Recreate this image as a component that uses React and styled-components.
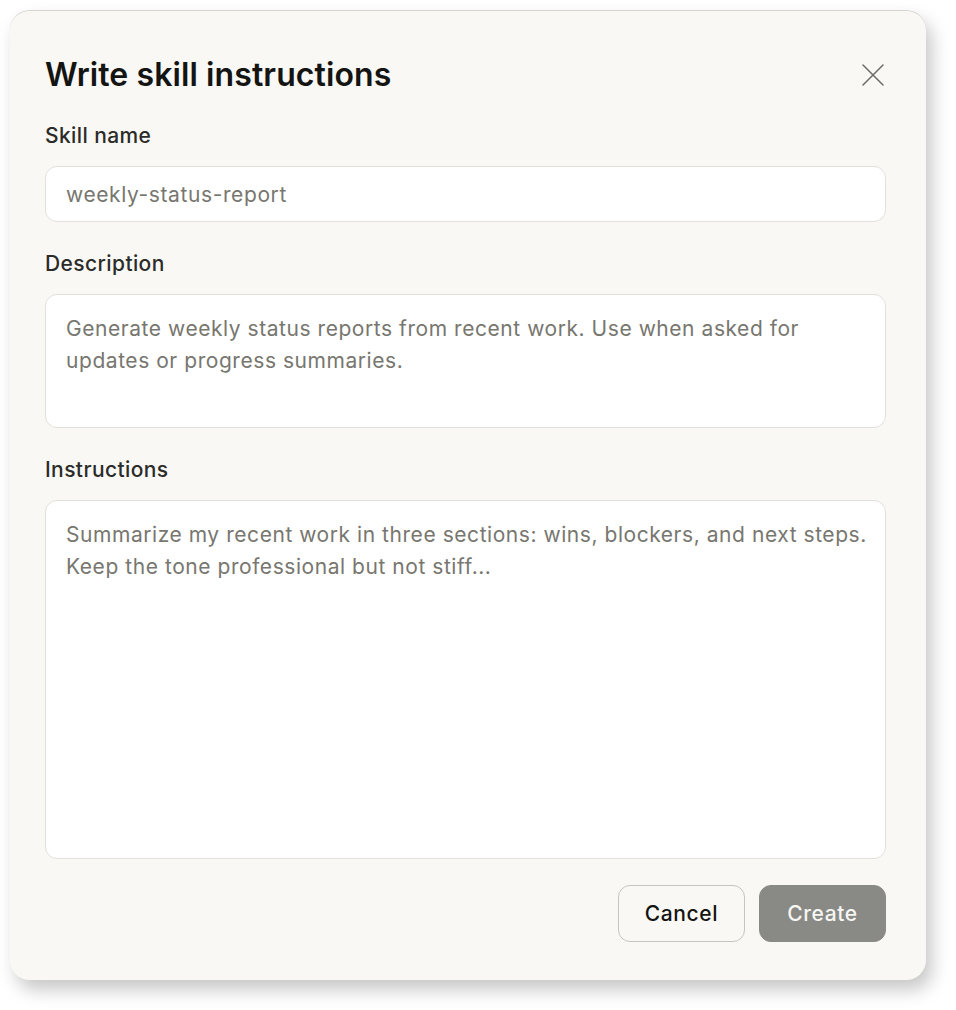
import styled, { createGlobalStyle } from "styled-components"

const GlobalStyle = createGlobalStyle`
  * { box-sizing: border-box; }
  body {
    margin: 0;
    background: #ffffff;
    font-family: Inter, "Noto Sans", sans-serif;
  }
`

const Page = styled.div`
  padding: 10px 0 0 10px;
  height: 1010px;
`

const Dialog = styled.div`
  width: 916px;
  height: 970px;
  background: #f9f8f4;
  border-radius: 20px;
  border-top: 1px solid #d6d5d0;
  box-shadow: 6px 10px 18px rgba(0, 0, 0, 0.22);
  padding: 44px 40px 38px 35px;
  display: flex;
  flex-direction: column;
`

const Header = styled.div`
  display: flex;
  align-items: center;
  justify-content: space-between;
  height: 40px;
  margin-bottom: 27px;
`

const Title = styled.h1`
  margin: 0;
  font-size: 32px;
  font-weight: 600;
  letter-spacing: 0.1px;
  color: #141413;
  line-height: 40px;
`

const CloseButton = styled.button`
  border: none;
  background: none;
  padding: 0;
  margin-right: 1px;
  width: 24px;
  height: 24px;
  display: flex;
  align-items: center;
  justify-content: center;
  cursor: pointer;
  color: #6b6a65;
`

const Field = styled.div`
  display: flex;
  flex-direction: column;
  gap: 16px;
  margin-bottom: ${p => p.$last ? "26px" : "28px"};
`

const Label = styled.label`
  font-size: 21px;
  font-weight: 500;
  letter-spacing: 0.4px;
  line-height: 28px;
  color: #2b2b29;
`

const Input = styled.input`
  height: 56px;
  width: 100%;
  padding: 0 20px;
  border: 1px solid #e2e0da;
  border-radius: 12px;
  background: #ffffff;
  font-family: inherit;
  font-size: 21px;
  letter-spacing: 0.6px;
  color: #2b2b29;
  outline: none;
  &::placeholder { color: #77766f; }
`

const TextArea = styled.textarea`
  height: ${p => p.$h}px;
  width: 100%;
  padding: 18px 12px 18px 20px;
  border: 1px solid #e2e0da;
  border-radius: 12px;
  background: #ffffff;
  font-family: inherit;
  font-size: 21px;
  letter-spacing: 0.55px;
  line-height: 32px;
  color: #2b2b29;
  resize: none;
  outline: none;
  &::placeholder { color: #77766f; }
`

const Footer = styled.div`
  display: flex;
  justify-content: flex-end;
  gap: 14px;
`

const Button = styled.button`
  width: 127px;
  height: 57px;
  border-radius: 12px;
  font-family: inherit;
  font-size: 21px;
  font-weight: 500;
  letter-spacing: 0.6px;
  cursor: pointer;
  border: 1px solid ${p => p.$primary ? "#898986" : "#c6c4be"};
  background: ${p => p.$primary ? "#898986" : "transparent"};
  color: ${p => p.$primary ? "#f6f6f3" : "#141413"};
`

const App = () => {
  return (
    <Page>
      <GlobalStyle />
      <Dialog>
        <Header>
          <Title>Write skill instructions</Title>
          <CloseButton aria-label="Close">
            <svg width="22" height="22" viewBox="0 0 22 22" fill="none" stroke="currentColor" strokeWidth="1.5" strokeLinecap="round">
              <path d="M1 1 L21 21 M21 1 L1 21" />
            </svg>
          </CloseButton>
        </Header>
        <Field>
          <Label>Skill name</Label>
          <Input placeholder="weekly-status-report" />
        </Field>
        <Field>
          <Label>Description</Label>
          <TextArea $h={134} placeholder="Generate weekly status reports from recent work. Use when asked for updates or progress summaries." />
        </Field>
        <Field $last>
          <Label>Instructions</Label>
          <TextArea $h={359} placeholder="Summarize my recent work in three sections: wins, blockers, and next steps. Keep the tone professional but not stiff..." />
        </Field>
        <Footer>
          <Button>Cancel</Button>
          <Button $primary>Create</Button>
        </Footer>
      </Dialog>
    </Page>
  )
}

export default App
